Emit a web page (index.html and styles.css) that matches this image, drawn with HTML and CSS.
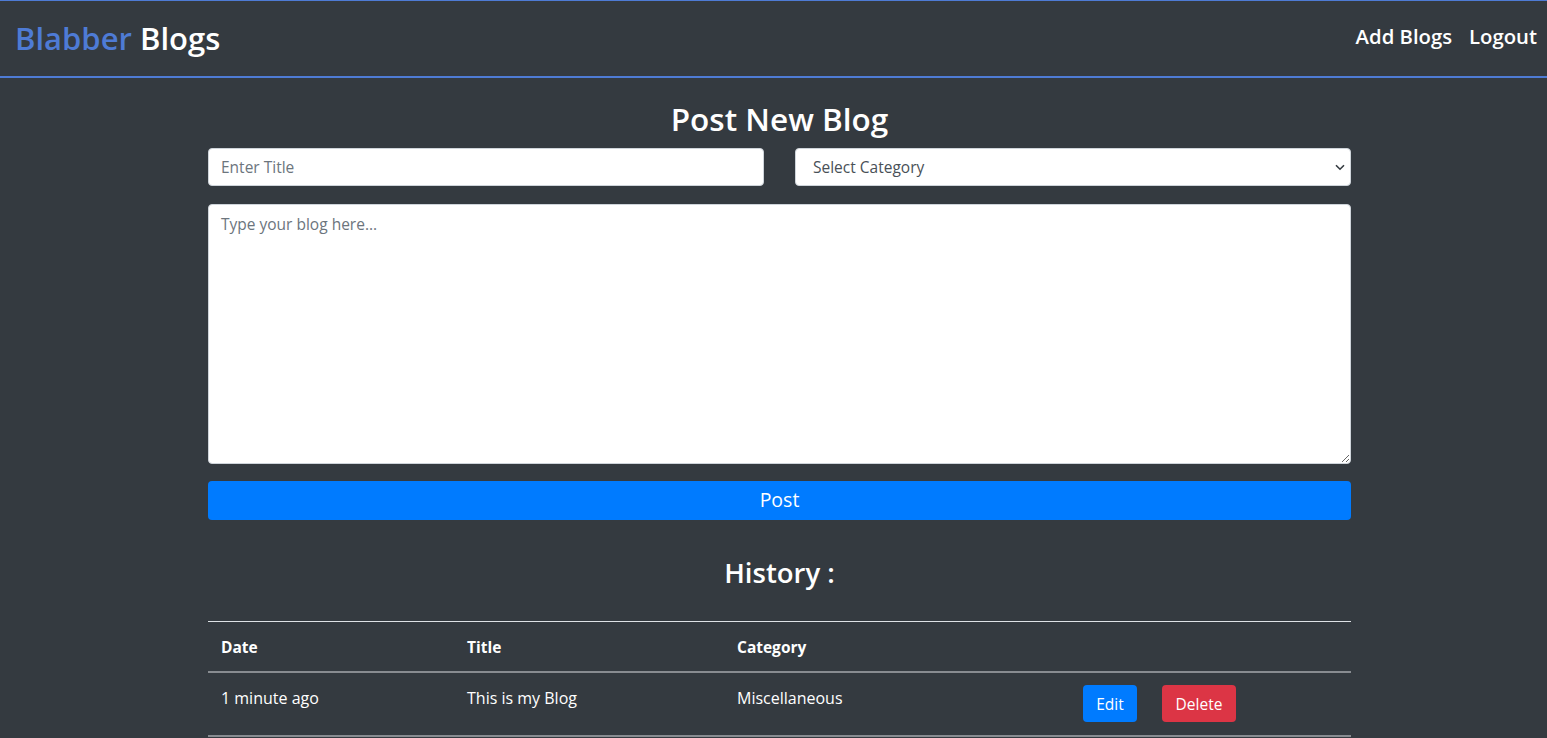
FILE: index.html
```html
<!DOCTYPE html>
<html lang="en">
<head>
<meta charset="utf-8">
<title>Blabber Blogs</title>
<link rel="stylesheet" href="styles.css">
</head>
<body>
<nav class="navbar">
  <a class="brand" href="#"><span class="brand-accent">Blabber</span> Blogs</a>
  <div class="nav-links">
    <a href="#">Add Blogs</a>
    <a href="#">Logout</a>
  </div>
</nav>
<main class="container">
  <h2 class="page-title">Post New Blog</h2>
  <div class="form-row">
    <input class="field" type="text" placeholder="Enter Title">
    <div class="select-wrap">
      <select class="field select">
        <option>Select Category</option>
      </select>
      <svg class="chev" width="10" height="7" viewBox="0 0 10 7"><path d="M1 1.2 5 5.2 9 1.2" fill="none" stroke="#343a40" stroke-width="1.6"/></svg>
    </div>
  </div>
  <textarea class="field textarea" placeholder="Type your blog here..."></textarea>
  <button class="post-btn">Post</button>

  <h3 class="history-title">History :</h3>
  <table class="history">
    <thead>
      <tr><th class="c-date">Date</th><th class="c-title">Title</th><th class="c-cat">Category</th><th class="c-act"></th></tr>
    </thead>
    <tbody>
      <tr>
        <td>1 minute ago</td>
        <td>This is my Blog</td>
        <td>Miscellaneous</td>
        <td><button class="btn btn-edit">Edit</button><button class="btn btn-delete">Delete</button></td>
      </tr>
    </tbody>
  </table>
</main>
</body>
</html>
```
FILE: styles.css
```css
* { box-sizing: border-box; }
html, body { margin: 0; padding: 0; }
body {
  background: #343a40;
  color: #ffffff;
  font-family: "Open Sans", "Noto Sans", sans-serif;
  font-size: 16px;
  height: 738px;
  overflow: hidden;
}
.navbar {
  display: flex;
  align-items: center;
  justify-content: space-between;
  height: 78px;
  border-top: 1px solid #4e7bd5;
  border-bottom: 2px solid #4e7bd5;
  padding: 0 10px 0 15px;
}
.brand {
  font-size: 31px;
  font-weight: 600;
  color: #ffffff;
  text-decoration: none;
  margin-top: -2px;
}
.brand-accent { color: #4e7bd5; }
.nav-links { display: flex; gap: 17px; margin-top: -5px; }
.nav-links a {
  color: #ffffff;
  font-size: 20.3px;
  font-weight: 600;
  text-decoration: none;
}
.container {
  width: 1143px;
  margin-left: 208px;
}
.page-title {
  margin: 22px 0 10px;
  height: 38px;
  line-height: 38px;
  text-align: center;
  font-size: 31.5px;
  font-weight: 600;
}
.form-row {
  display: grid;
  grid-template-columns: 1fr 1fr;
  column-gap: 31px;
}
.field {
  display: block;
  width: 100%;
  height: 38px;
  padding: 6px 12px;
  font-family: inherit;
  font-size: 15.5px;
  color: #495057;
  background: #ffffff;
  border: 1px solid #ced4da;
  border-radius: 4px;
  outline: none;
}
.field::placeholder { color: #6c757d; }
.select-wrap { position: relative; }
.select {
  appearance: none;
  -webkit-appearance: none;
  padding-left: 17px;
  color: #495057;
}
.chev { position: absolute; right: 6px; top: 16px; pointer-events: none; }
.textarea {
  margin-top: 18px;
  height: 260px;
  resize: vertical;
  padding-top: 8px;
}
.post-btn {
  display: block;
  width: 100%;
  height: 39px;
  margin-top: 17px;
  background: #007bff;
  color: #ffffff;
  border: none;
  border-radius: 4px;
  font-family: inherit;
  font-size: 19.5px;
  padding-bottom: 3px;
}
.history-title {
  margin: 36px 0 31px;
  height: 34px;
  line-height: 34px;
  text-align: center;
  font-size: 27.5px;
  font-weight: 600;
}
.history {
  width: 100%;
  border-collapse: collapse;
  table-layout: fixed;
  font-size: 16px;
}
.history th, .history td {
  text-align: left;
  vertical-align: top;
  padding: 13px 13px 12px;
  line-height: 24px;
}
.history thead tr { border-top: 1px solid #dee2e6; border-bottom: 2px solid #888c91; }
.history thead th { font-weight: 700; font-size: 15.5px; }
.history tbody tr { border-bottom: 2px solid #888c91; }
.history tbody td { padding-bottom: 13px; }
.c-date { width: 246px; }
.c-title { width: 270px; }
.c-cat { width: 346px; }
.btn {
  height: 37px;
  padding: 0 12px;
  border: none;
  border-radius: 4px;
  color: #ffffff;
  font-family: inherit;
  font-size: 15.5px;
  vertical-align: top;
}
.history tbody td .btn { margin-top: -1px; }
.btn-edit { background: #007bff; width: 54px; }
.btn-delete { background: #dc3545; width: 74px; margin-left: 25px; }
```
